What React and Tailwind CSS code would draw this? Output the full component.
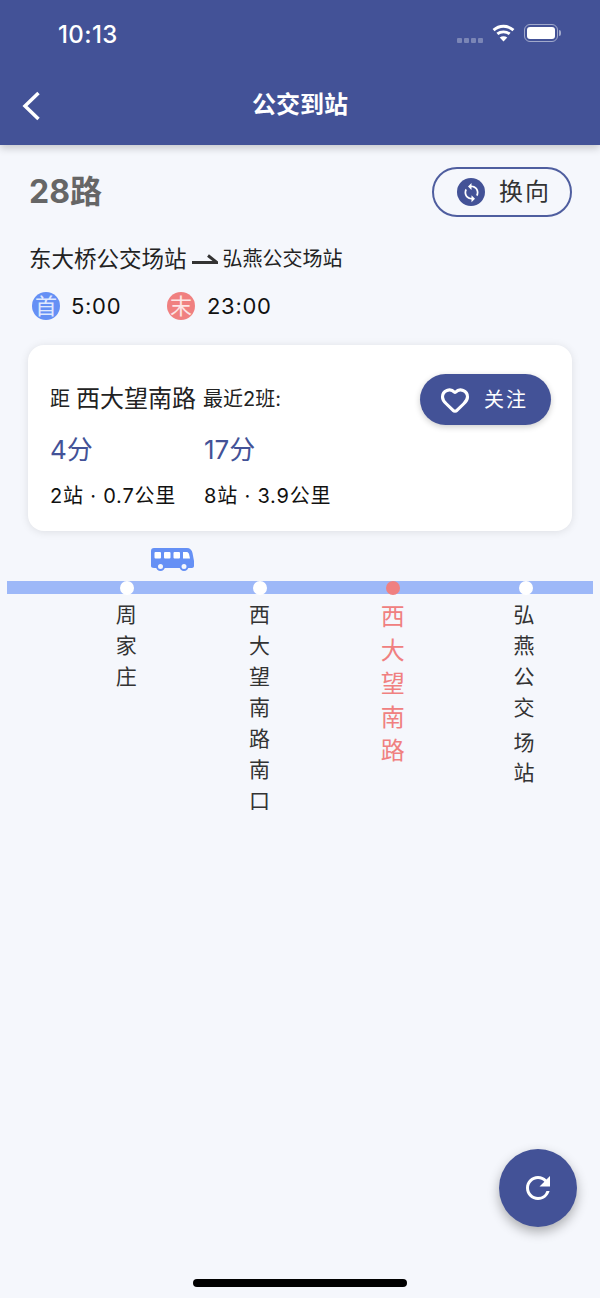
import { Heart } from "lucide-react"
import { MdRefresh, MdSync } from "react-icons/md"

function WifiIcon() {
  return (
    <svg width="23" height="18" viewBox="0 0 24 19" fill="none" stroke="white" strokeWidth="3">
      <path d="M1.500 6.500C7.500 1 16.500 1 22.500 6.500" />
      <path d="M5.500 10.500C9 7.500 15 7.500 18.500 10.500" />
      <path d="M12 18.500L8 14.200C10.400 12.400 13.600 12.400 16 14.200Z" fill="white" stroke="none" />
    </svg>
  )
}

function BusIcon() {
  return (
    <svg width="43" height="23" viewBox="0 0 43 23" className="block">
      <path
        d="M3 0H36C39 0 41 2 41.500 5L43 13V18C43 19 42 20 41 20H3C1 20 0 19 0 18V3C0 1 1 0 3 0Z"
        fill="#6590f5"
      />
      <rect x="3.500" y="4" width="6.500" height="6.500" rx="1" fill="white" />
      <rect x="13" y="4" width="6.500" height="6.500" rx="1" fill="white" />
      <rect x="22.500" y="4" width="6.500" height="6.500" rx="1" fill="white" />
      <path d="M32 4H36C37 4 37.500 5 38 6L39 10.500H32Z" fill="white" />
      <circle cx="9.500" cy="18.500" r="3.500" fill="#f5f7fc" stroke="#6590f5" strokeWidth="2" />
      <circle cx="33" cy="18.500" r="3.500" fill="#f5f7fc" stroke="#6590f5" strokeWidth="2" />
    </svg>
  )
}

function Station({ name, active, children }) {
  return (
    <div className="flex flex-col items-center">
      <div
        className={`-mt-[13px] h-[14px] w-[14px] rounded-full ${active ? "bg-[#f08080]" : "bg-white"}`}
      />
      {active ? (
        <div className="mr-[1px] mt-[5px] w-[24px] text-[24px] leading-[33.500px] text-[#f08080]">{name}</div>
      ) : (
        <div className="mr-[1px] mt-[4px] w-[21px] text-[21px] leading-[31px] text-[#333]">{children || name}</div>
      )}
    </div>
  )
}

function Arrival({ minutes, detail }) {
  return (
    <div>
      <div className="text-[26px] leading-[32px] text-[#435297]">{minutes}</div>
      <div className="mt-[16px] text-[20px] leading-[28px] tracking-[0.8px] text-[#111]">{detail}</div>
    </div>
  )
}

export default function App() {
  return (
    <div className="relative flex h-[1298px] w-[600px] flex-col overflow-hidden bg-[#f5f7fc] font-[Inter,'Noto_Sans_CJK_SC',sans-serif]">
      <header className="h-[145px] bg-[#435297] text-white shadow-[0_3px_8px_rgba(0,0,0,0.2)]">
        <div className="flex h-[68px] items-center justify-between pl-[58px] pr-[39px]">
          <span className="mt-[2px] text-[24px] font-medium tracking-[0.4px]">10:13</span>
          <div className="flex items-center">
            <div className="mt-[12px] flex gap-[2px]">
              <span className="h-[5px] w-[5px] rounded-[1px] bg-white/30" />
              <span className="h-[5px] w-[5px] rounded-[1px] bg-white/30" />
              <span className="h-[5px] w-[5px] rounded-[1px] bg-white/30" />
              <span className="h-[5px] w-[5px] rounded-[1px] bg-white/30" />
            </div>
            <div className="-mt-[2px] ml-[9px]">
              <WifiIcon />
            </div>
            <div className="-mt-[2px] ml-[9px] flex h-[18px] w-[34px] items-center rounded-[6px] border border-white/50 p-[2px]">
              <div className="h-full w-full rounded-[3px] bg-white" />
            </div>
            <div className="-mt-[2px] ml-px h-[6px] w-[2px] rounded-r-full bg-white/50" />
          </div>
        </div>
        <div className="relative flex h-[74px] items-center justify-center">
          <svg
            width="20"
            height="30"
            viewBox="0 0 20 30"
            fill="none"
            stroke="white"
            strokeWidth="3.500"
            className="absolute left-[21px] top-[23px]"
          >
            <path d="M17.500 2L4 15L17.500 28" />
          </svg>
          <span className="text-[24px] font-bold">公交到站</span>
        </div>
      </header>

      <section className="px-[28px]">
        <div className="mt-[22px] flex items-center justify-between">
          <h1 className="pl-px text-[32px] font-bold leading-[50px] text-[#666]">28路</h1>
          <button className="flex h-[50px] w-[140px] items-center rounded-full border-2 border-[#4f5e9f] pl-[23px]">
            <span className="flex h-[28px] w-[28px] items-center justify-center rounded-full bg-[#435297]">
              <MdSync className="text-white" size={21} />
            </span>
            <span className="ml-[14px] text-[24px] tracking-[2px] text-[#333]">换向</span>
          </button>
        </div>

        <div className="mt-[26px] flex items-center pl-px text-[#222]">
          <span className="text-[22.500px] leading-[32px]">东大桥公交场站</span>
          <svg width="26" height="11" viewBox="0 0 26 11" className="ml-[5px] mt-[1px]">
            <path d="M0 8.500H25L16 1.500" fill="none" stroke="#333" strokeWidth="3" />
          </svg>
          <span className="ml-[5px] text-[20px] leading-[32px]">弘燕公交场站</span>
        </div>

        <div className="mt-[16px] flex items-center pl-[4px] text-[22px] leading-[30px] tracking-[0.7px] text-[#111]">
          <span className="flex h-[28px] w-[28px] items-center justify-center rounded-full bg-[#6590f5] text-[22px] tracking-normal text-white/80">
            首
          </span>
          <span className="ml-[11px] w-[96px]">5:00</span>
          <span className="flex h-[28px] w-[28px] items-center justify-center rounded-full bg-[#f08080] text-[22px] tracking-normal text-white/80">
            末
          </span>
          <span className="ml-[12px]">23:00</span>
        </div>

        <div className="mt-[24px] flex h-[186px] justify-between rounded-[16px] bg-white pl-[22px] pr-[21px] pt-[29px] shadow-[0_1px_8px_rgba(0,0,0,0.1)]">
          <div>
            <div className="flex h-[50px] items-center text-[#222]">
              <span className="text-[20px]">距</span>
              <span className="ml-[6px] text-[24px]">西大望南路</span>
              <span className="ml-[7px] text-[20px]">最近2班:</span>
            </div>
            <div className="mt-[10px] flex">
              <div className="w-[154px]">
                <Arrival minutes="4分" detail="2站 · 0.7公里" />
              </div>
              <Arrival minutes="17分" detail="8站 · 3.9公里" />
            </div>
          </div>
          <button className="flex h-[51px] w-[131px] items-center rounded-full bg-[#435297] pl-[20px] text-white shadow-[0_2px_6px_rgba(0,0,0,0.2)]">
            <Heart size={30} strokeWidth={2.500} />
            <span className="ml-[14px] text-[20px] tracking-[2px]">关注</span>
          </button>
        </div>
      </section>

      <section className="mt-[17px]">
        <div className="pl-[151px]">
          <BusIcon />
        </div>
        <div className="mx-[7px] mt-[10px] h-[13px] bg-[#9db8f8]" />
        <div className="ml-[60px] mr-[7px] grid grid-cols-4">
          <Station name="周家庄" />
          <Station name="西大望南路南口" />
          <Station name="西大望南路" active />
          <Station>
            <div className="-ml-[2px]">
              弘燕公交
              <span className="block pt-[4px]">场</span>
              <span className="-mt-[1px] block">站</span>
            </div>
          </Station>
        </div>
      </section>

      <button className="absolute left-[499px] top-[1149px] flex h-[78px] w-[78px] items-center justify-center rounded-full bg-[#435297] text-white shadow-[0_5px_12px_rgba(0,0,0,0.3)]">
        <MdRefresh size={36} />
      </button>

      <div className="mx-auto mb-[11px] mt-auto h-[8px] w-[214px] rounded-full bg-black" />
    </div>
  )
}
